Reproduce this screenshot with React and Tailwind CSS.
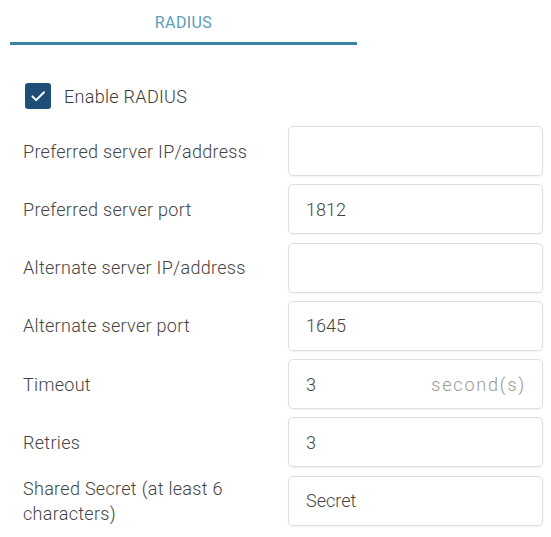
const rows = [
  { label: "Preferred server IP/address", value: "" },
  { label: "Preferred server port", value: "1812" },
  { label: "Alternate server IP/address", value: "" },
  { label: "Alternate server port", value: "1645" },
  { label: "Timeout", value: "3", suffix: "second(s)" },
  { label: "Retries", value: "3" },
  { label: "Shared Secret (at least 6 characters)", value: "Secret" },
]

export default function App() {
  return (
    <div className="w-[551px] h-[537px] bg-white overflow-hidden font-['Roboto',sans-serif] font-light">
      {/* Tab */}
      <div className="ml-[10px] w-[347px] h-[45px] border-b-[3px] border-[#3c82a6] flex justify-center pt-[13px]">
        <span className="text-[16px] leading-[20px] font-normal text-[#5b9dbc] tracking-[0.4px]">RADIUS</span>
      </div>

      {/* Enable checkbox */}
      <div className="mt-[38px] pl-[25px] flex items-center gap-[13px]">
        <div className="w-[26px] h-[26px] rounded-[3px] bg-[#1e4e78] flex items-center justify-center">
          <svg width="18" height="18" viewBox="0 0 24 24" fill="none" stroke="white" strokeWidth="2.6" strokeLinecap="round" strokeLinejoin="round">
            <path d="M4.5 12.5l5 5L20 7" />
          </svg>
        </div>
        <span className="text-[18px] leading-[25px] text-[#3a3a3a] tracking-[0.3px]">Enable RADIUS</span>
      </div>

      {/* Form */}
      <div className="mt-[17px] flex flex-col gap-[8.3px]">
        {rows.map((r) => (
          <div key={r.label} className="flex items-center">
            <div className="w-[288px] pl-[23px] pr-[20px] text-[18px] leading-[25px] text-[#444444] tracking-[0.3px]">{r.label}</div>
            <div className="w-[255px] h-[50px] rounded-[5px] border border-[#dedede] shadow-[0_1px_2px_rgba(0,0,0,0.06)] flex items-center justify-between pl-[17px] pr-[16px]">
              <span className="text-[18px] text-[#444444]">{r.value}</span>
              {r.suffix && <span className="text-[18px] text-[#999999] tracking-[1.8px]">{r.suffix}</span>}
            </div>
          </div>
        ))}
      </div>
    </div>
  )
}
